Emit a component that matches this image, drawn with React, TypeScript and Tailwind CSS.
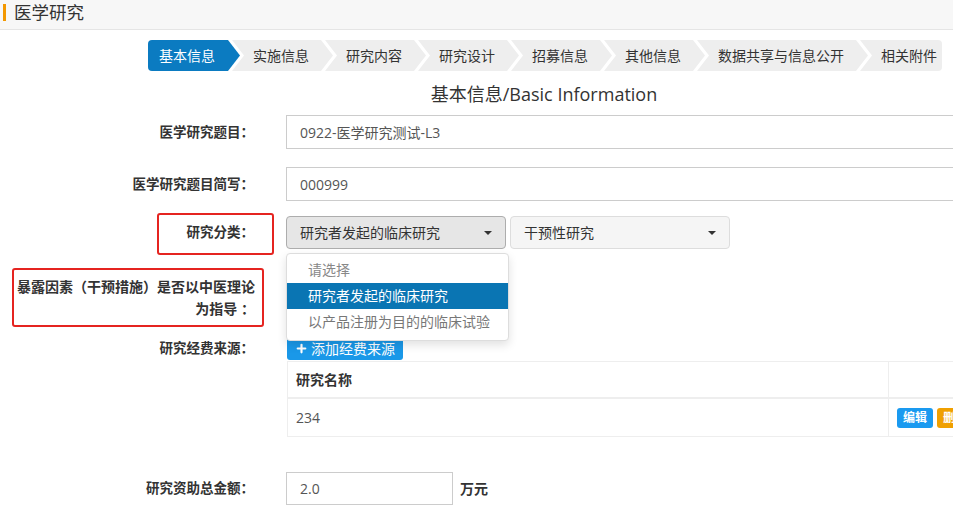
import { Plus } from 'lucide-react';

type Step = { label: string };

const steps: Step[] = [
  { label: '基本信息' },
  { label: '实施信息' },
  { label: '研究内容' },
  { label: '研究设计' },
  { label: '招募信息' },
  { label: '其他信息' },
  { label: '数据共享与信息公开' },
  { label: '相关附件' },
];

function StepBar() {
  return (
    <div className="mt-[10px] ml-[148px] flex h-[31px] text-[14px] leading-[31px] whitespace-nowrap">
      {steps.map((s, i) => {
        if (i === 0) {
          return (
            <div
              key={s.label}
              className="rounded-l-[4px] bg-[#0b7bc1] pl-[11px] pr-[25px] text-white [clip-path:polygon(0_0,calc(100%_-_12px)_0,100%_50%,calc(100%_-_12px)_100%,0_100%)]"
            >
              {s.label}
            </div>
          );
        }
        if (i === steps.length - 1) {
          return (
            <div
              key={s.label}
              className="ml-[-8px] rounded-r-[4px] bg-[#eeeeee] pl-[21px] pr-[5px] text-[#333] [clip-path:polygon(0_0,100%_0,100%_100%,0_100%,12px_50%)]"
            >
              {s.label}
            </div>
          );
        }
        return (
          <div
            key={s.label}
            className="ml-[-8px] bg-[#eeeeee] pl-[21px] pr-[24px] text-[#333] [clip-path:polygon(0_0,calc(100%_-_12px)_0,100%_50%,calc(100%_-_12px)_100%,0_100%,12px_50%)]"
          >
            {s.label}
          </div>
        );
      })}
    </div>
  );
}

function Label({ children }: { children: React.ReactNode }) {
  return (
    <div className="w-[254px] shrink-0 text-right text-[13.5px] font-bold text-[#333]">
      {children}
    </div>
  );
}

function Caret() {
  return (
    <span className="h-0 w-0 border-x-[4px] border-t-[4px] border-x-transparent border-t-[#333]" />
  );
}

export default function App() {
  return (
    <div className="relative h-[520px] w-[953px] overflow-hidden bg-white font-['Open_Sans','Noto_Sans_CJK_SC',sans-serif] text-[14px] text-[#333]">
      {/* 顶部标题 */}
      <div className="flex h-[30px] items-start border-b border-[#e5e5e5] bg-[#f7f7f7] pt-[4px]">
        <span className="ml-[3px] h-[17px] w-[3px] bg-[#f39800]" />
        <span className="ml-[8px] text-[17.5px] leading-[17px] text-[#333]">医学研究</span>
      </div>

      <StepBar />

      <div className="mt-[12px] pl-[135px] text-center text-[18px] leading-[22px] text-[#333]">
        基本信息/Basic Information
      </div>

      {/* 医学研究题目 */}
      <div className="mt-[10px] flex h-[34px] items-center">
        <Label>医学研究题目：</Label>
        <div className="ml-[32px] flex h-[34px] w-[700px] shrink-0 items-center border border-[#ccc] pl-[13px] text-[#555]">
          0922-医学研究测试-L3
        </div>
      </div>

      {/* 简写 */}
      <div className="mt-[18px] flex h-[34px] items-center">
        <Label>医学研究题目简写：</Label>
        <div className="ml-[32px] flex h-[34px] w-[700px] shrink-0 items-center border border-[#ccc] pl-[13px] text-[#555]">
          000999
        </div>
      </div>

      {/* 研究分类 */}
      <div className="mt-[15px] flex h-[33px] items-center">
        <Label>研究分类：</Label>
        <div className="ml-[32px] flex h-[33px] w-[220px] shrink-0 items-center justify-between rounded-[4px] border border-[#adadad] bg-[#e6e6e6] pl-[13px] pr-[13px] text-[#333]">
          <span>研究者发起的临床研究</span>
          <Caret />
        </div>
        <div className="ml-[4px] flex h-[33px] w-[220px] shrink-0 items-center justify-between rounded-[4px] border border-[#dddddd] bg-[#f5f5f5] pl-[13px] pr-[13px] text-[#333]">
          <span>干预性研究</span>
          <Caret />
        </div>
      </div>

      {/* 暴露因素 */}
      <div className="mt-[27px] flex h-[44px]">
        <div className="w-[255px] shrink-0 text-right text-[14px] font-bold leading-[22px] text-[#333]">
          暴露因素（干预措施）是否以中医理论
          <br />
          为指导 ：
        </div>
      </div>

      {/* 研究经费来源 */}
      <div className="mt-[16px] flex h-[24px] items-center">
        <Label>研究经费来源：</Label>
        <button className="ml-[33px] flex h-[24px] items-center gap-[3px] rounded-[3px] bg-[#1a98e8] px-[8px] text-[14px] text-white">
          <Plus size={13} strokeWidth={4} />
          添加经费来源
        </button>
      </div>

      <div className="ml-[287px] mt-[1px] w-[700px] border border-[#eeeeee]">
        <div className="flex h-[37px] border-b-2 border-[#eeeeee]">
          <div className="flex w-[600px] items-center pl-[8px] font-bold">研究名称</div>
          <div className="flex-1 border-l border-[#eeeeee]" />
        </div>
        <div className="flex h-[37px]">
          <div className="flex w-[600px] items-center pl-[8px] text-[#555]">234</div>
          <div className="flex flex-1 items-center gap-[4px] border-l border-[#eeeeee] pl-[8px]">
            <span className="flex h-[20px] w-[36px] items-center justify-center rounded-[3px] bg-[#1a9af0] text-[12px] font-bold text-white">
              编辑
            </span>
            <span className="flex h-[20px] w-[36px] items-center justify-center rounded-[3px] bg-[#f0a000] text-[12px] font-bold text-white">
              删除
            </span>
          </div>
        </div>
      </div>

      {/* 研究资助总金额 */}
      <div className="mt-[35px] flex h-[33px] items-center">
        <Label>研究资助总金额：</Label>
        <div className="ml-[32px] flex h-[33px] w-[167px] shrink-0 items-center border border-[#ccc] pl-[13px] text-[#555]">
          2.0
        </div>
        <span className="ml-[7px] font-bold">万元</span>
      </div>

      {/* 下拉菜单 */}
      <div className="absolute left-[286px] top-[253px] w-[223px] rounded-[4px] border border-[#dddddd] bg-white pt-[3px] pb-[5px] shadow-[0_4px_10px_rgba(0,0,0,0.12)]">
        <div className="pl-[21px] leading-[26px] text-[#888]">请选择</div>
        <div className="bg-[#0a75b3] pl-[21px] leading-[26px] text-white">研究者发起的临床研究</div>
        <div className="pl-[21px] leading-[26px] text-[#777]">以产品注册为目的的临床试验</div>
      </div>

      {/* 红框标注 */}
      <div className="absolute left-[157px] top-[213px] h-[42px] w-[117px] rounded-[3px] border-2 border-[#e52420]" />
      <div className="absolute left-[12px] top-[268px] h-[59px] w-[252px] rounded-[3px] border-2 border-[#e52420]" />
    </div>
  );
}
